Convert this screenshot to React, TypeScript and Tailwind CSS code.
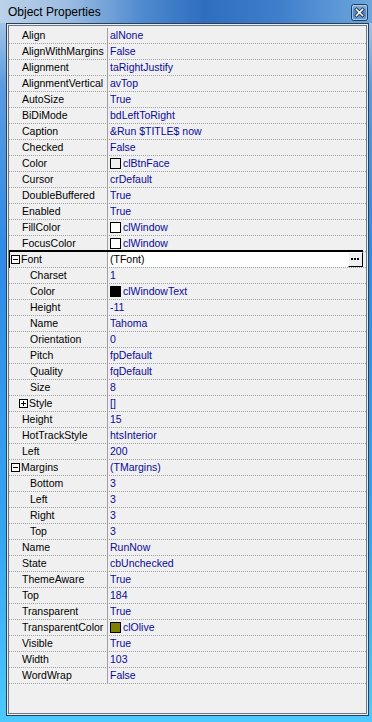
type Row = {
  name: string;
  value: string;
  level?: 0 | 1;
  expander?: "+" | "-";
  swatch?: string;
  selected?: boolean;
};

const rows: Row[] = [
  { name: "Align", value: "alNone" },
  { name: "AlignWithMargins", value: "False" },
  { name: "Alignment", value: "taRightJustify" },
  { name: "AlignmentVertical", value: "avTop" },
  { name: "AutoSize", value: "True" },
  { name: "BiDiMode", value: "bdLeftToRight" },
  { name: "Caption", value: "&Run $TITLE$ now" },
  { name: "Checked", value: "False" },
  { name: "Color", value: "clBtnFace", swatch: "#f0f0f0" },
  { name: "Cursor", value: "crDefault" },
  { name: "DoubleBuffered", value: "True" },
  { name: "Enabled", value: "True" },
  { name: "FillColor", value: "clWindow", swatch: "#ffffff" },
  { name: "FocusColor", value: "clWindow", swatch: "#ffffff" },
  { name: "Font", value: "(TFont)", expander: "-", selected: true },
  { name: "Charset", value: "1", level: 1 },
  { name: "Color", value: "clWindowText", level: 1, swatch: "#000000" },
  { name: "Height", value: "-11", level: 1 },
  { name: "Name", value: "Tahoma", level: 1 },
  { name: "Orientation", value: "0", level: 1 },
  { name: "Pitch", value: "fpDefault", level: 1 },
  { name: "Quality", value: "fqDefault", level: 1 },
  { name: "Size", value: "8", level: 1 },
  { name: "Style", value: "[]", level: 1, expander: "+" },
  { name: "Height", value: "15" },
  { name: "HotTrackStyle", value: "htsInterior" },
  { name: "Left", value: "200" },
  { name: "Margins", value: "(TMargins)", expander: "-" },
  { name: "Bottom", value: "3", level: 1 },
  { name: "Left", value: "3", level: 1 },
  { name: "Right", value: "3", level: 1 },
  { name: "Top", value: "3", level: 1 },
  { name: "Name", value: "RunNow" },
  { name: "State", value: "cbUnchecked" },
  { name: "ThemeAware", value: "True" },
  { name: "Top", value: "184" },
  { name: "Transparent", value: "True" },
  { name: "TransparentColor", value: "clOlive", swatch: "#808000" },
  { name: "Visible", value: "True" },
  { name: "Width", value: "103" },
  { name: "WordWrap", value: "False" },
];

function ExpandBox({ kind }: { kind: "+" | "-" }) {
  return (
    <svg width="9" height="9" viewBox="0 0 9 9" className="shrink-0 mr-[1px]">
      <rect x="0.5" y="0.5" width="8" height="8" fill="#fff" stroke="#000" />
      <path d="M2 4.5h5" stroke="#000" />
      {kind === "+" && <path d="M4.5 2v5" stroke="#000" />}
    </svg>
  );
}

function PropRow({ row }: { row: Row }) {
  const level = row.level ?? 0;
  let pad = level === 0 ? "pl-[13px]" : "pl-[21px]";
  if (row.expander) pad = level === 0 ? "pl-[2px]" : "pl-[10px]";
  return (
    <div className="relative flex h-[16px] border-b border-dotted border-[#a0a0a0]">
      <div className={`flex items-center w-[99px] shrink-0 border-r border-[#a0a0a0] text-black ${pad}`}>
        {row.expander && <ExpandBox kind={row.expander} />}
        <span className="whitespace-nowrap">{row.name}</span>
      </div>
      <div
        className={`flex items-center flex-1 pl-[2px] whitespace-nowrap ${
          row.selected ? "bg-white text-black mr-[18px]" : "text-[#0a0a9a]"
        }`}
      >
        {row.swatch && (
          <span
            className="w-[11px] h-[11px] border border-black mr-[2px] shrink-0"
            style={{ backgroundColor: row.swatch }}
          />
        )}
        {row.value}
      </div>
      {row.selected && (
        <>
          <div className="pointer-events-none absolute -top-[2px] left-0 right-[3px] -bottom-[1px] border-t-2 border-l border-black" />
          <div className="absolute right-[3px] top-0 w-[15px] h-[15px] bg-[#f0f0f0] border-t border-l border-white border-r border-b border-r-black border-b-black flex items-center justify-center">
            <svg width="9" height="3" viewBox="0 0 9 3">
              <rect x="0" y="0" width="2" height="2" fill="#000" />
              <rect x="3" y="0" width="2" height="2" fill="#000" />
              <rect x="6" y="0" width="2" height="2" fill="#000" />
            </svg>
          </div>
        </>
      )}
    </div>
  );
}

export default function App() {
  return (
    <div className="w-[372px] h-[722px] flex flex-col overflow-hidden font-['Liberation_Sans',Arial,sans-serif] bg-[linear-gradient(180deg,#bcd3ec_0%,#5a9be0_12%,#2f8be6_35%,#35a6f2_75%,#4ccaff_100%)]">
      <div className="h-[23px] shrink-0 flex items-center justify-between pl-[8px] pr-[4px] bg-[linear-gradient(90deg,#bcd2ea_0%,#9dbde2_18%,#4f8bd0_38%,#2f6dbf_55%,#3f7ecb_75%,#6fa7dd_100%)]">
        <span className="text-[12px] text-black leading-none pt-[1px]">Object Properties</span>
        <svg width="17" height="17" viewBox="0 0 17 17" className="mt-[1px]">
          <defs>
            <linearGradient id="cb" x1="0" y1="0" x2="0" y2="1">
              <stop offset="0" stopColor="#8fb8e4" />
              <stop offset="0.5" stopColor="#4f86c6" />
              <stop offset="1" stopColor="#6fa2d8" />
            </linearGradient>
          </defs>
          <rect x="0.5" y="0.5" width="16" height="16" rx="2" fill="url(#cb)" stroke="#1f3d63" />
          <rect x="1.5" y="1.5" width="14" height="14" rx="1.5" fill="none" stroke="#c9def3" strokeOpacity="0.6" />
          <path d="M5.5 5.5l6 6M11.5 5.5l-6 6" stroke="#1e2f45" strokeWidth="3.2" strokeLinecap="square" />
          <path d="M5.5 5.5l6 6M11.5 5.5l-6 6" stroke="#ffffff" strokeWidth="1.6" strokeLinecap="square" />
        </svg>
      </div>
      <div className="flex-1 flex pl-[6px] pr-[3px] pb-[6px]">
        <div className="flex-1 flex border border-[#2d3e50]">
          <div className="flex-1 flex border border-[#e8eef4]">
            <div className="flex-1 flex flex-col border border-[#6d7a86] bg-[#f0f0f0] pt-[2px] text-[10.5px] leading-none">
              {rows.map((r, i) => (
                <PropRow key={i} row={r} />
              ))}
            </div>
          </div>
        </div>
      </div>
    </div>
  );
}
